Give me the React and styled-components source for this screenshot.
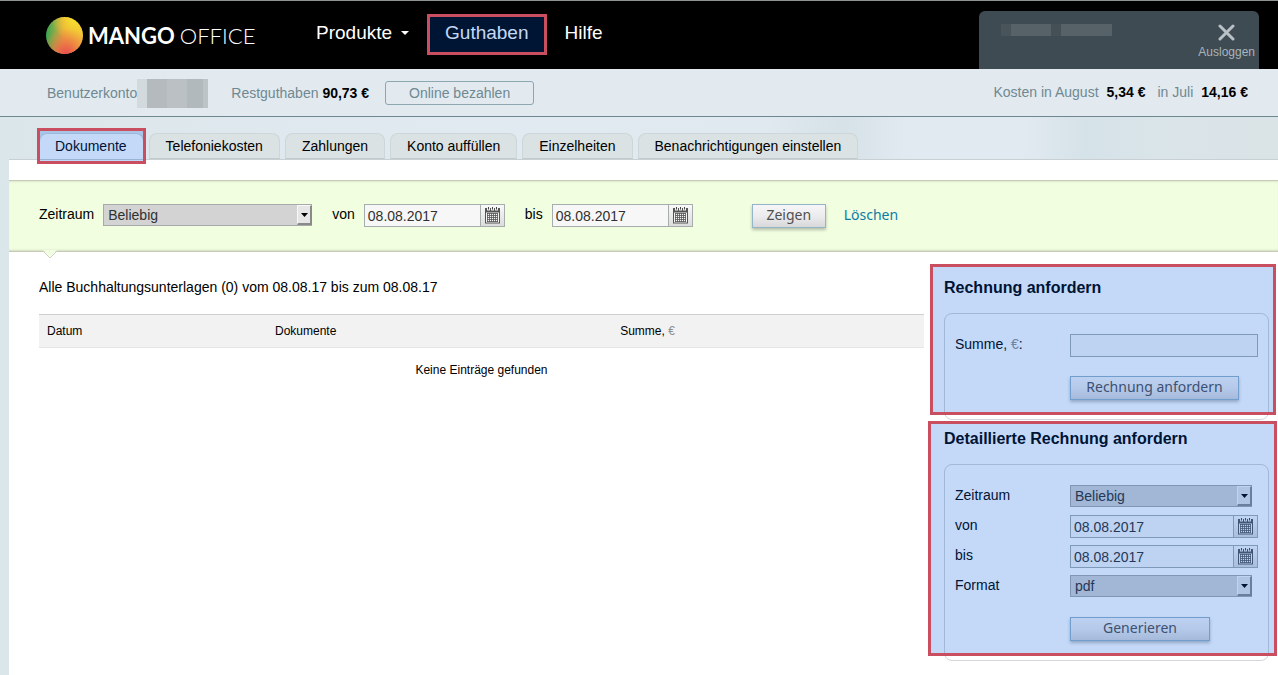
import React, { useState } from 'react';
import styled, { createGlobalStyle } from 'styled-components';

const GlobalStyle = createGlobalStyle`
  * {
    box-sizing: border-box;
  }

  body {
    margin: 0;
    background: #fff;
    color: #000;
    font-family: "Liberation Sans", Arial, sans-serif;
    font-size: 14px;
    line-height: 16px;
  }

  button, input, select {
    font: inherit;
    margin: 0;
  }
`;

const Page = styled.div`
  min-height: 100vh;
  display: flex;
  flex-direction: column;
  background: linear-gradient(90deg, #dbe6ea 0, #e1eaf1 40%, #dfe9ef 60%, #d6e2e8 66%, #e1eaf0 71%, #e1eaf0 80%, #d5e2e8 85%, #dae5e9 91%, #dae3e6 100%);
`;

const Header = styled.header`
  height: 69px;
  display: flex;
  align-items: flex-end;
  padding: 0 19px 0 46px;
  background: #000;
  border-top: 1px solid #8e9494;
`;

const Logo = styled.a`
  display: flex;
  align-items: center;
  align-self: center;
  width: 270px;
  gap: 5px;
  color: #fff;
  font: 300 22px/37px Lato, sans-serif;
  text-decoration: none;

  b {
    font-weight: 700;
  }
`;

const Nav = styled.nav`
  display: flex;
  align-self: flex-start;
  align-items: center;
  padding-top: 13px;
`;

const NavLink = styled.a`
  position: relative;
  display: flex;
  align-items: center;
  gap: 9px;
  height: 41px;
  padding: 0 18px 4px;
  color: #fff;
  font-size: 19px;
  text-decoration: none;

  &:first-child {
    padding-left: 0;
  }
`;

const Highlight = styled.span`
  position: absolute;
  top: ${props => props.$top || 0}px;
  right: ${props => props.$right || 0}px;
  bottom: ${props => props.$bottom || 0}px;
  left: ${props => props.$left || 0}px;
  border: 3px solid #c94f60;
  background: rgba(0, 88, 220, 0.23);
  pointer-events: none;
  z-index: 2;
`;

const UserPanel = styled.div`
  display: flex;
  justify-content: space-between;
  width: 280px;
  height: 58px;
  margin-left: auto;
  padding: 13px 4px 0 22px;
  border-radius: 6px 6px 0 0;
  background: #3f4b52;
`;

const UserMask = styled.span`
  width: 111px;
  height: 12px;
  background: linear-gradient(90deg, #48545a 0 10px, #566267 10px 50px, #445056 50px 60px, #566267 60px);
`;

const LogoutButton = styled.button`
  display: flex;
  flex-direction: column;
  align-items: center;
  gap: 3px;
  height: 36px;
  padding: 0;
  border: 0;
  background: none;
  color: #a9b4ba;
  font-size: 12px;
  line-height: 16px;
  cursor: pointer;
`;

const BalanceBar = styled.div`
  height: 48px;
  display: flex;
  align-items: center;
  padding: 1px 30px 0 47px;
  background: #e2eaef;
  border-bottom: 1px solid #6f8791;
  color: #6f8892;

  b {
    color: #000;
  }
`;

const AccountMask = styled.span`
  width: 71px;
  height: 29px;
  margin-right: 23px;
  background: linear-gradient(90deg, #d3dade 0 10px, #b4babe 10px 30px, #bac0c4 30px 50px, #b2b9bd 50px 66px, #bdc4c8 66px);
`;

const PayButton = styled.button`
  width: 149px;
  height: 24px;
  margin-left: 16px;
  padding: 0 0 1px;
  border: 1px solid #8da7b1;
  border-radius: 3px;
  background: transparent;
  color: #6f8892;
  cursor: pointer;
`;

const Costs = styled.div`
  display: flex;
  gap: 8px;
  margin-left: auto;
  padding-bottom: 2px;

  b + span {
    margin-left: 4px;
  }
`;

const Tabs = styled.nav`
  display: flex;
  gap: 5px;
  padding: 16px 0 0 39px;
`;

const Tab = styled.a`
  position: relative;
  height: 26px;
  padding: 4px 16px;
  border: 1px solid #cdd6d9;
  border-bottom-color: ${props => (props.$active ? '#fff' : '#c3cacd')};
  border-radius: 8px 8px 0 0;
  background: ${props => (props.$active ? '#fff' : '#dae2e3')};
  color: #000;
  text-decoration: none;

  &:first-child {
    padding-left: 15px;
  }
`;

const Content = styled.main`
  flex: 1;
  margin-left: 9px;
  padding-top: 20px;
  background: #fff;
  border-top: 1px solid #c9d0d3;
`;

const FilterBar = styled.form`
  position: relative;
  display: flex;
  align-items: flex-start;
  height: 72px;
  padding: 23px 30px 0;
  background: #f1fee0;
  border-top: 1px solid #c5cbb6;
  border-bottom: 1px solid #c5cbb6;
  box-shadow: inset 0 2px 2px -1px #dfe7cc, inset 0 -2px 2px -1px #d4dcc0;
`;

const Pointer = styled.svg`
  position: absolute;
  left: 33px;
  top: 69px;
`;

const Label = styled.label`
  line-height: 20px;
  color: #000;
`;

const FilterLabel = styled(Label)`
  margin-right: 9px;

  span + & {
    margin-left: 20px;
  }
`;

const SelectBox = styled.span`
  position: relative;
  display: block;
  width: ${props => props.$width}px;
  height: 22px;

  select {
    appearance: none;
    width: 100%;
    height: 22px;
    padding: 0 20px 0 4px;
    border: 1px solid #a6aaaa;
    border-radius: 0;
    background: #d3d3d3;
    color: #303030;
  }
`;

const SelectArrow = styled.span`
  position: absolute;
  top: 1px;
  right: 0;
  display: flex;
  align-items: center;
  justify-content: center;
  width: 15px;
  height: 20px;
  background: #e6e6e6;
  border: solid;
  border-width: 1px 2px 2px 1px;
  border-color: #f7f7f7 #8a8a8a #8a8a8a #f7f7f7;
  pointer-events: none;
`;

const DateBox = styled.span`
  display: flex;
  width: ${props => props.$width}px;
  height: 23px;
  border: 1px solid #a6adad;

  input {
    flex: 1;
    min-width: 0;
    padding: 0 3px;
    border: 0;
    background: #f7f7f7;
    color: #303030;
  }

  button {
    display: flex;
    align-items: center;
    justify-content: center;
    width: 24px;
    padding: 0;
    border: 0;
    border-left: 1px solid #a6adad;
    background: linear-gradient(#f9f9f9, #dcdcdc);
    cursor: pointer;
  }
`;

const Button = styled.button`
  width: ${props => props.$width}px;
  height: 24px;
  padding: 0 0 2px;
  border: 1px solid #94b4c8;
  background: linear-gradient(#f6f6f8, #ececee 50%, #d8d8db);
  box-shadow: 0 2px 3px rgba(0, 0, 0, 0.25);
  color: #505050;
  font-family: "Noto Sans", sans-serif;
  font-size: 14px;
  line-height: 20px;
  cursor: pointer;
`;

const FilterActions = styled.div`
  display: flex;
  gap: 18px;
  margin-left: 59px;
`;

const ClearLink = styled.a`
  color: #0b7ba6;
  font-family: "Noto Sans", sans-serif;
  line-height: 22px;
  text-decoration: none;
`;

const Columns = styled.div`
  display: flex;
  gap: 20px;
  padding: 26px 9px 12px 30px;
`;

const Documents = styled.section`
  flex: 1;
  min-width: 0;
`;

const Caption = styled.p`
  margin: 1px 0 19px;
`;

const Table = styled.table`
  width: 100%;
  border-collapse: collapse;
  table-layout: fixed;
  font-size: 12px;

  th {
    height: 33px;
    padding: 0 8px;
    background: #f2f2f2;
    border-top: 1px solid #cfcfcf;
    border-bottom: 1px solid #e6e6e6;
    font-weight: normal;
    text-align: left;
  }

  th:nth-child(1) {
    width: 228px;
  }

  th:nth-child(2) {
    width: 39%;
  }

  td {
    height: 44px;
    padding: 0;
    text-align: center;
  }
`;

const Muted = styled.span`
  color: #8f8f8f;
`;

const Sidebar = styled.aside`
  width: 325px;
  display: flex;
  flex-direction: column;
  gap: 9px;
`;

const Request = styled.form`
  position: relative;
`;

const RequestTitle = styled.h2`
  margin: 0 0 16px;
  font-size: 16px;
  line-height: 19px;
`;

const RequestBox = styled.div`
  display: grid;
  grid-template-columns: 115px 1fr;
  grid-auto-rows: minmax(23px, auto);
  gap: 7px 0;
  padding: 20px 10px 19px;
  border: 1px solid #d2d6d8;
  border-radius: 8px;
`;

const AmountInput = styled.input`
  width: 188px;
  height: 23px;
  padding: 0 3px;
  border: 1px solid #a6adad;
  background: #f7f7f7;
`;

const RequestAction = styled.div`
  grid-column: 2;
  padding-top: 12px;
  height: 36px;
`;

function MangoIcon() {
  return (
    <svg width="37" height="37" viewBox="0 0 37 37" aria-hidden="true">
      <defs>
        <linearGradient id="mangoBase" x1="0" y1="0" x2="1" y2="0">
          <stop offset="0" stopColor="#36a650" />
          <stop offset="0.22" stopColor="#7fac4b" />
          <stop offset="0.48" stopColor="#eaa03f" />
          <stop offset="1" stopColor="#f3bf3a" />
        </linearGradient>
        <radialGradient id="mangoYellow" cx="0.75" cy="0.05" r="0.6">
          <stop offset="0" stopColor="#f6e32c" />
          <stop offset="1" stopColor="#f6e32c" stopOpacity="0" />
        </radialGradient>
        <radialGradient id="mangoRed" cx="0.54" cy="1" r="0.7">
          <stop offset="0" stopColor="#ea4d50" />
          <stop offset="0.35" stopColor="#ec6a48" stopOpacity="0.85" />
          <stop offset="1" stopColor="#f0903c" stopOpacity="0" />
        </radialGradient>
      </defs>
      <circle cx="18.5" cy="18.5" r="18.5" fill="url(#mangoBase)" />
      <circle cx="18.5" cy="18.5" r="18.5" fill="url(#mangoYellow)" />
      <circle cx="18.5" cy="18.5" r="18.5" fill="url(#mangoRed)" />
    </svg>
  );
}

function CalendarIcon() {
  return (
    <svg width="15" height="17" viewBox="0 0 15 17" aria-hidden="true">
      <path d="M0 1h15v15.500H0z" fill="#555" />
      <path d="M1 5.500h13v10H1z" fill="#f4f4f4" />
      <path d="M2 0h3v3.500H2zM6 0h3v3.500H6zM10 0h3v3.500h-3z" fill="#f1f1f1" />
      <path d="M3 0h1v2.500H3zM7 0h1v2.500H7zM11 0h1v2.500h-1z" fill="#444" />
      <path
        d="M2 6.500h11M2 8.500h11M2 10.500h11M2 12.500h11M2 14.500h11M2.500 6v9M4.500 6v9M6.500 6v9M8.500 6v9M10.500 6v9M12.500 6v9"
        fill="none"
        stroke="#555"
        strokeWidth="0.8"
      />
    </svg>
  );
}

function Select({ id, width, options }) {
  return (
    <SelectBox $width={width}>
      <select id={id}>
        {options.map(option => (
          <option key={option}>{option}</option>
        ))}
      </select>
      <SelectArrow>
        <svg width="7" height="4" viewBox="0 0 7 4" aria-hidden="true">
          <path d="M0 0h7L3.5 4z" fill="#000" />
        </svg>
      </SelectArrow>
    </SelectBox>
  );
}

function DateField({ id, width }) {
  const [value, setValue] = useState('08.08.2017');

  return (
    <DateBox $width={width}>
      <input id={id} type="text" value={value} onChange={e => setValue(e.target.value)} />
      <button type="button" aria-label="Kalender">
        <CalendarIcon />
      </button>
    </DateBox>
  );
}

const tabs = [
  'Dokumente',
  'Telefoniekosten',
  'Zahlungen',
  'Konto auffüllen',
  'Einzelheiten',
  'Benachrichtigungen einstellen'
];

function App() {
  const [activeTab, setActiveTab] = useState('Dokumente');

  const stopSubmit = (e) => e.preventDefault();

  return (
    <>
      <GlobalStyle />
      <Page>
        <Header>
          <Logo href="#">
            <MangoIcon />
            <b>MANGO</b>
            <span>OFFICE</span>
          </Logo>
          <Nav>
            <NavLink href="#">
              Produkte
              <svg width="8" height="4" viewBox="0 0 8 4" aria-hidden="true">
                <path d="M0 0h8L4 4z" fill="#fff" />
              </svg>
            </NavLink>
            <NavLink href="#">
              Guthaben
              <Highlight />
            </NavLink>
            <NavLink href="#">Hilfe</NavLink>
          </Nav>
          <UserPanel>
            <UserMask />
            <LogoutButton type="button">
              <svg width="17" height="17" viewBox="0 0 17 17" aria-hidden="true">
                <path d="M2 2l13 13M15 2L2 15" stroke="#b9c1c6" strokeWidth="3" strokeLinecap="round" />
              </svg>
              Ausloggen
            </LogoutButton>
          </UserPanel>
        </Header>

        <BalanceBar>
          <span>Benutzerkonto</span>
          <AccountMask />
          <span>Restguthaben <b>90,73 €</b></span>
          <PayButton type="button">Online bezahlen</PayButton>
          <Costs>
            <span>Kosten in August</span>
            <b>5,34 €</b>
            <span>in Juli</span>
            <b>14,16 €</b>
          </Costs>
        </BalanceBar>

        <Tabs>
          {tabs.map(tab => (
            <Tab key={tab} href="#" $active={tab === activeTab} onClick={() => setActiveTab(tab)}>
              {tab}
              {tab === 'Dokumente' && <Highlight $top={-6} $right={-3} $bottom={-6} $left={-3} />}
            </Tab>
          ))}
        </Tabs>

        <Content>
          <FilterBar onSubmit={stopSubmit}>
            <FilterLabel htmlFor="period">Zeitraum</FilterLabel>
            <Select id="period" width={209} options={['Beliebig', 'Heute', 'Monat']} />
            <FilterLabel htmlFor="from">von</FilterLabel>
            <DateField id="from" width={141} />
            <FilterLabel htmlFor="to">bis</FilterLabel>
            <DateField id="to" width={141} />
            <FilterActions>
              <Button $width={74}>Zeigen</Button>
              <ClearLink href="#">Löschen</ClearLink>
            </FilterActions>
            <Pointer width="16" height="9" viewBox="0 0 16 9" aria-hidden="true">
              <path d="M1 0l7 7 7-7z" fill="#f1fee0" />
              <path d="M1 1l7 7 7-7" fill="none" stroke="#cdd4be" />
            </Pointer>
          </FilterBar>

          <Columns>
            <Documents>
              <Caption>Alle Buchhaltungsunterlagen (0) vom 08.08.17 bis zum 08.08.17</Caption>
              <Table>
                <thead>
                  <tr>
                    <th>Datum</th>
                    <th>Dokumente</th>
                    <th>Summe, <Muted>€</Muted></th>
                  </tr>
                </thead>
                <tbody>
                  <tr>
                    <td colSpan={3}>Keine Einträge gefunden</td>
                  </tr>
                </tbody>
              </Table>
            </Documents>

            <Sidebar>
              <Request onSubmit={stopSubmit}>
                <RequestTitle>Rechnung anfordern</RequestTitle>
                <RequestBox>
                  <Label htmlFor="amount">Summe, <Muted>€</Muted>:</Label>
                  <AmountInput id="amount" type="text" />
                  <RequestAction>
                    <Button $width={169}>Rechnung anfordern</Button>
                  </RequestAction>
                </RequestBox>
                <Highlight $top={-14} $right={-7} $bottom={5} $left={-14} />
              </Request>

              <Request onSubmit={stopSubmit}>
                <RequestTitle>Detaillierte Rechnung anfordern</RequestTitle>
                <RequestBox>
                  <Label htmlFor="detailPeriod">Zeitraum</Label>
                  <Select id="detailPeriod" width={182} options={['Beliebig', 'Heute', 'Monat']} />
                  <Label htmlFor="detailFrom">von</Label>
                  <DateField id="detailFrom" width={188} />
                  <Label htmlFor="detailTo">bis</Label>
                  <DateField id="detailTo" width={188} />
                  <Label htmlFor="format">Format</Label>
                  <Select id="format" width={182} options={['pdf', 'xls']} />
                  <RequestAction>
                    <Button $width={140}>Generieren</Button>
                  </RequestAction>
                </RequestBox>
                <Highlight $top={-8} $right={-8} $bottom={5} $left={-16} />
              </Request>
            </Sidebar>
          </Columns>
        </Content>
      </Page>
    </>
  );
}

export default App;
